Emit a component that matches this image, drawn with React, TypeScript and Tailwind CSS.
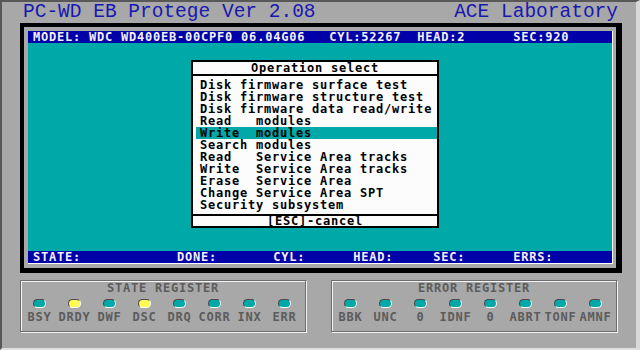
import React from "react";

const mono = { fontFamily: '"DejaVu Sans Mono", "Liberation Mono", monospace' };
const thin = { fontFamily: '"Liberation Mono", "DejaVu Sans Mono", monospace' };

const items = [
  "Disk firmware surface test",
  "Disk firmware structure test",
  "Disk firmware data read/write",
  "Read   modules",
  "Write  modules",
  "Search modules",
  "Read   Service Area tracks",
  "Write  Service Area tracks",
  "Erase  Service Area",
  "Change Service Area SPT",
  "Security subsystem",
];

const stateBits = [
  { name: "BSY", on: false },
  { name: "DRDY", on: true },
  { name: "DWF", on: false },
  { name: "DSC", on: true },
  { name: "DRQ", on: false },
  { name: "CORR", on: false },
  { name: "INX", on: false },
  { name: "ERR", on: false },
];

const errorBits = [
  { name: "BBK", on: false },
  { name: "UNC", on: false },
  { name: "0", on: false },
  { name: "IDNF", on: false },
  { name: "0", on: false },
  { name: "ABRT", on: false },
  { name: "TONF", on: false },
  { name: "AMNF", on: false },
];

function Register({ title, bits }: { title: string; bits: { name: string; on: boolean }[] }) {
  return (
    <div className="w-[286px] h-[52px] border border-[#6c6c6c] shadow-[inset_1px_1px_0_#f4f4f4,1px_1px_0_#f4f4f4] flex flex-col font-bold text-[12px] tracking-[0.78px] text-[#5c5c5c]">
      <div className="text-center leading-[12px] mt-[1px]">{title}</div>
      <div className="grid grid-cols-8 pl-[1px] pr-[3px] mt-[5px]">
        {bits.map((b, i) => (
          <div key={i} className="flex justify-center">
            <span
              className={`w-[13px] h-[9px] rounded-full border border-t-[#4a4a4a] border-l-[#4a4a4a] border-r-white border-b-white ${
                b.on ? "bg-[#fcfc54]" : "bg-[#00a8a8]"
              }`}
            />
          </div>
        ))}
      </div>
      <div className="grid grid-cols-8 pl-[1px] pr-[3px] mt-[3px] leading-[12px]">
        {bits.map((b, i) => (
          <div key={i} className="text-center">
            {b.name}
          </div>
        ))}
      </div>
    </div>
  );
}

export default function App() {
  return (
    <div
      className="w-[640px] h-[350px] overflow-hidden bg-[#a8a8a8] flex flex-col border-t-2 border-l-2 border-r-4 border-b-2 border-t-[#585858] border-l-[#585858] border-r-[#d8d8d8] border-b-[#e0e0e0]"
      style={mono}
    >
      {/* title line */}
      <div
        className="h-[21px] flex items-center justify-between pl-[21px] pr-[18px] text-[19.5px] leading-[21px] text-[#1818b0]"
        style={thin}
      >
        <span className="whitespace-pre">PC-WD EB Protege Ver 2.08</span>
        <span>ACE Laboratory</span>
      </div>

      {/* screen frame */}
      <div className="ml-[18px] w-[602px] h-[250px] border-black border-t-4 border-l-4 border-r-[6px] border-b-[5px] pt-[4px] pl-[4px] pb-[4px] pr-[3px]">
        <div className="w-full h-full flex flex-col border-r border-b border-white text-[12px] tracking-[0.78px] font-bold">
          <div className="h-[12px] bg-[#0000a8] text-[#f4f0ff] leading-[12px] pl-[5px] whitespace-pre">
            {"MODEL: WDC WD400EB-00CPF0 06.04G06   CYL:52267  HEAD:2      SEC:920"}
          </div>

          <div className="flex-1 bg-[#00a8a8]">
            <div className="mt-[17px] ml-[163px] w-[248px] h-[168px] bg-[#fcfcfc] border-2 border-black flex flex-col text-black">
              <div className="h-[12px] leading-[12px] text-center border-b-2 border-black box-content">
                Operation select
              </div>
              <div className="pt-[3px] pb-[3px] pl-[3px]">
                {items.map((it, i) => (
                  <div
                    key={i}
                    className={`h-[12px] leading-[12px] pl-[4px] whitespace-pre ${
                      i === 4 ? "bg-[#00a8a8]" : ""
                    }`}
                  >
                    {it}
                  </div>
                ))}
              </div>
              <div className="border-t-2 border-black h-[12px] leading-[10px] text-center">
                [ESC]-cancel
              </div>
            </div>
          </div>

          <div className="h-[12px] bg-[#0000a8] text-[#f4f0ff] leading-[12px] pl-[5px] whitespace-pre">
            {"STATE:            DONE:       CYL:      HEAD:     SEC:      ERRS:"}
          </div>
        </div>
      </div>

      {/* registers */}
      <div className="flex ml-[18px] mt-[7px] gap-[25px]">
        <Register title="STATE REGISTER" bits={stateBits} />
        <Register title="ERROR REGISTER" bits={errorBits} />
      </div>
    </div>
  );
}
